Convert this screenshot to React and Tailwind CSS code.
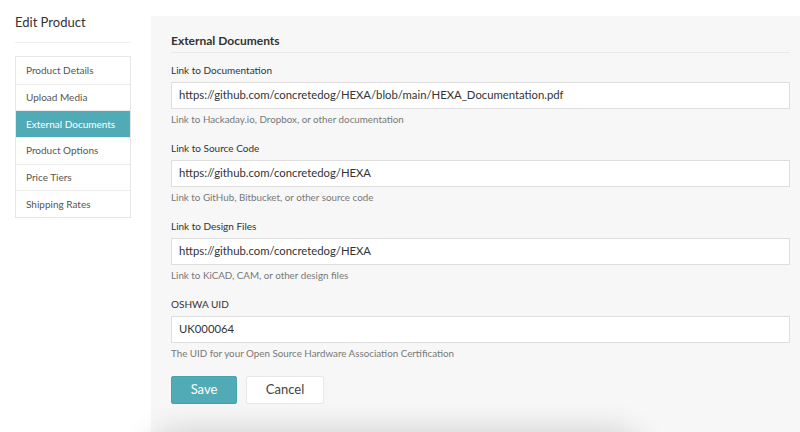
import React from 'react';

const navItems = [
  'Product Details',
  'Upload Media',
  'External Documents',
  'Product Options',
  'Price Tiers',
  'Shipping Rates',
];

const fields = [
  {
    label: 'Link to Documentation',
    value: 'https://github.com/concretedog/HEXA/blob/main/HEXA_Documentation.pdf',
    hint: 'Link to Hackaday.io, Dropbox, or other documentation',
  },
  {
    label: 'Link to Source Code',
    value: 'https://github.com/concretedog/HEXA',
    hint: 'Link to GitHub, Bitbucket, or other source code',
  },
  {
    label: 'Link to Design Files',
    value: 'https://github.com/concretedog/HEXA',
    hint: 'Link to KiCAD, CAM, or other design files',
  },
  {
    label: 'OSHWA UID',
    value: 'UK000064',
    hint: 'The UID for your Open Source Hardware Association Certification',
  },
];

export default function App() {
  const active = 'External Documents';

  return (
    <div
      className="relative h-[432px] w-[800px] overflow-hidden bg-white text-[#333]"
      style={{ fontFamily: 'Lato, "Open Sans", sans-serif' }}
    >
      <div className="flex items-start">
        {/* sidebar */}
        <div className="w-[151px] shrink-0 pl-[15px] pr-[20px] pt-[14px]">
          <h2 className="text-[13px] leading-[16px] text-[#333] pb-[12px] border-b border-[#eee]">Edit Product</h2>
          <ul className="mt-[13px] border border-[#e6e6e6] bg-white">
            {navItems.map((item, i) => (
              <li
                key={item}
                className={`h-[26.7px] flex items-center pl-[10px] text-[10px] ${
                  i > 0 ? 'border-t border-[#ececec]' : ''
                } ${item === active ? 'bg-[#51abb6] text-white' : 'text-[#555]'}`}
              >
                {item}
              </li>
            ))}
          </ul>
        </div>

        {/* main panel */}
        <div className="flex-1 mt-[16px] bg-[#f7f7f7] pl-[20px] pr-[10px] pt-[17px] pb-[40px]">
          <h3 className="text-[12px] font-bold leading-[16px] text-[#333] pb-[3px] border-b border-[#e8e8e8]">
            External Documents
          </h3>
          <div className="pt-[11px]">
            {fields.map((f) => (
              <div key={f.label} className="mb-[17px]">
                <label className="block text-[10px] leading-[12px] text-[#333] mb-[6px]">{f.label}</label>
                <div className="h-[27px] border border-[#dedede] bg-white flex items-center px-[7px] text-[11.3px] text-[#333]">
                  {f.value}
                </div>
                <p className="mt-[4px] text-[9.8px] leading-[12px] text-[#777]">{f.hint}</p>
              </div>
            ))}
          </div>
          <div className="flex gap-[9px]">
            <button className="w-[66px] h-[28px] rounded-[2px] bg-[#51abb6] border border-[#4aa2ad] text-white text-[13px]">
              Save
            </button>
            <button className="w-[78px] h-[28px] rounded-[2px] bg-white border border-[#e8e8e8] text-[#444] text-[13px]">
              Cancel
            </button>
          </div>
        </div>
      </div>

      {/* shadow of the element just below the fold */}
      <div className="absolute left-[160px] top-[442px] h-[80px] w-[470px] rounded-[20px] bg-white shadow-[0_0_30px_14px_rgba(0,0,0,0.14)]" />
    </div>
  );
}
